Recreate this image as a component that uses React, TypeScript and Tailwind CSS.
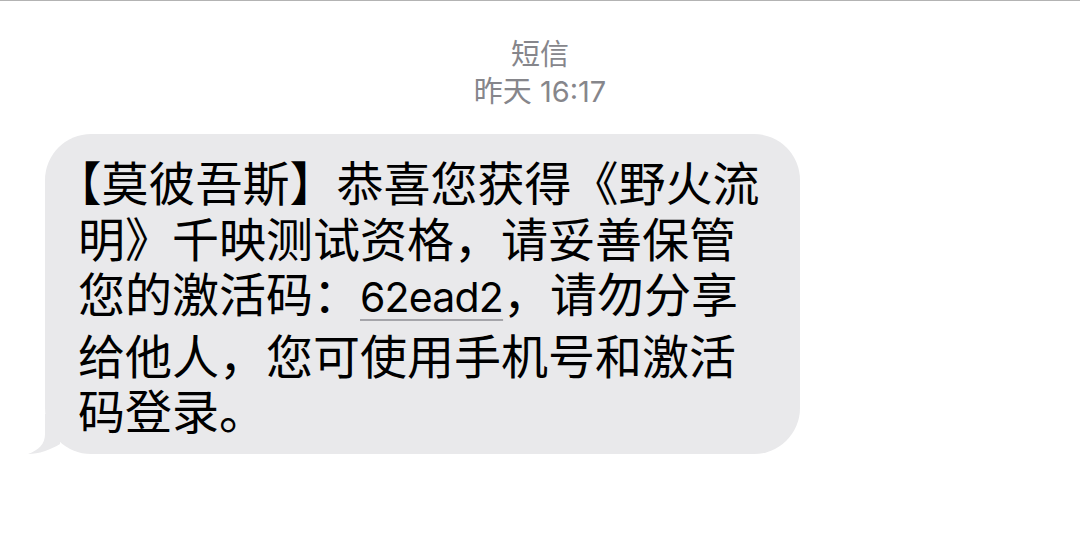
export default function App() {
  return (
    <div className="w-[1080px] h-[558px] bg-white border-t border-[#b3b3b3] overflow-hidden font-['Inter','Noto_Sans_CJK_SC',sans-serif]">
      {/* HEADER */}
      <div className="flex flex-col items-center pt-[33px] text-[#86868b]">
        <p className="text-[29px] leading-[37px] font-['Noto_Sans_CJK_SC',sans-serif]">短信</p>
        <p className="text-[29px] leading-[37px]">
          <span className="font-['Noto_Sans_CJK_SC',sans-serif]">昨天</span> 16:17
        </p>
      </div>

      {/* BUBBLE */}
      <div className="pl-[45px] mt-[24px]">
        <div className="relative w-[755px] rounded-[46px] bg-[#e9e9eb] pl-[33px] pt-[19px] pb-[17px]">
          <svg
            className="absolute left-[-17px] bottom-0"
            width="40"
            height="40"
            viewBox="0 0 40 40"
          >
            <path d="M17 0 L17 20 C17 30 11 36 0 40 C11 40 22 36 32 30 L32 0 Z" fill="#e9e9eb" />
          </svg>
          <div className="relative text-[47px] leading-[55.5px] text-black whitespace-nowrap font-['Noto_Sans_CJK_SC',sans-serif]">
            <p>
              <span className="[font-feature-settings:'halt']">【</span>莫彼吾斯】恭喜您获得《野火流
            </p>
            <p>明》千映测试资格，请妥善保管</p>
            <p>
              您的激活码：
              <span className="font-['Inter',sans-serif] text-[41px] tracking-[-0.8px] underline decoration-[#a5a5aa] decoration-2 underline-offset-[7px]">
                62ead2
              </span>
              ，请勿分享
            </p>
            <p>给他人，您可使用手机号和激活</p>
            <p>码登录。</p>
          </div>
        </div>
      </div>
    </div>
  );
}
